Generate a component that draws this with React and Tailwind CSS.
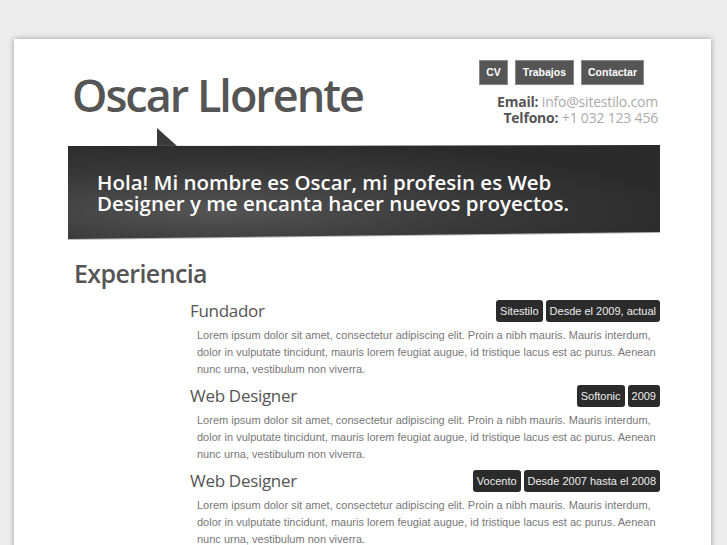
import React from 'react';

const jobs = [
  { title: 'Fundador', tags: ['Sitestilo', 'Desde el 2009, actual'] },
  { title: 'Web Designer', tags: ['Softonic', '2009'] },
  { title: 'Web Designer', tags: ['Vocento', 'Desde 2007 hasta el 2008'] },
];

const lorem =
  'Lorem ipsum dolor sit amet, consectetur adipiscing elit. Proin a nibh mauris. Mauris interdum, dolor in vulputate tincidunt, mauris lorem feugiat augue, id tristique lacus est ac purus. Aenean nunc urna, vestibulum non viverra.';

const App = () => {
  return (
    <div className="min-h-[545px] h-[545px] overflow-hidden bg-[#ededed] pt-[39px] pl-[14px] font-['Open_Sans',sans-serif]">
      <div className="w-[697px] min-h-[520px] bg-white shadow-[0_0_6px_rgba(0,0,0,0.35)] pl-[54px] pr-[51px] pt-[21px]">
        {/* Header */}
        <div className="flex justify-between">
          <h1 className="mt-[7px] ml-[4px] text-[45px] leading-[56px] font-semibold tracking-[-2px] text-[#555]">
            Oscar Llorente
          </h1>
          <div className="flex flex-col items-end">
            <nav className="flex gap-[7px] mr-[16px] font-['Liberation_Sans',sans-serif] text-[10.5px] font-bold text-white">
              <a className="h-[25px] px-[6px] flex items-center bg-[#555] border border-[#888]">CV</a>
              <a className="h-[25px] px-[7px] flex items-center bg-[#555] border border-[#888]">Trabajos</a>
              <a className="h-[25px] px-[6px] flex items-center bg-[#555] border border-[#888]">Contactar</a>
            </nav>
            <div className="mt-[9px] mr-[2px] text-right text-[14px] leading-[15.5px] tracking-[-0.2px] text-[#aaa]">
              <div>
                <span className="font-bold text-[#555]">Email:</span> info@sitestilo.com
              </div>
              <div>
                <span className="font-bold text-[#555]">Telfono:</span> +1 032 123 456
              </div>
            </div>
          </div>
        </div>

        {/* Speech banner */}
        <div className="relative mt-[20px]">
          <div className="absolute left-[89px] top-[-17px] w-0 h-0 border-l-[20px] border-l-[#3a3a3a] border-t-[18px] border-t-transparent"></div>
          <div className="bg-[#bbb] [clip-path:polygon(0_1px,100%_0,100%_calc(100%-7px),0_100%)] pb-[1px]">
            <div className="h-[94px] bg-[radial-gradient(ellipse_at_25%_70%,#555_0%,#3a3a3a_40%,#2b2b2b_75%)] [clip-path:polygon(0_1px,100%_0,100%_calc(100%-7px),0_100%)] pl-[29px] pt-[27px]">
              <p className="text-white text-[20.5px] leading-[21px] font-semibold tracking-[0px] w-[520px]">
                Hola! Mi nombre es Oscar, mi profesin es Web Designer y me encanta hacer nuevos proyectos.
              </p>
            </div>
          </div>
        </div>

        {/* Experiencia */}
        <h2 className="mt-[17px] ml-[6px] text-[25px] leading-[32px] font-semibold tracking-[-0.6px] text-[#555]">
          Experiencia
        </h2>
        <div className="ml-[122px] mt-[11px] flex flex-col gap-[7px]">
          {jobs.map((job, i) => (
            <div key={i}>
              <div className="flex justify-between items-center h-[22px]">
                <h3 className="text-[17px] leading-[22px] font-normal text-[#555] tracking-[-0.3px]">{job.title}</h3>
                <div className="flex gap-[3px] font-['Liberation_Sans',sans-serif] text-[11px]">
                  {job.tags.map((t) => (
                    <span key={t} className="h-[22px] px-[4px] flex items-center rounded-[3px] bg-[#2b2b2b] text-[#eee]">
                      {t}
                    </span>
                  ))}
                </div>
              </div>
              <p className="mt-[5px] ml-[7px] font-['Liberation_Sans',sans-serif] text-[11px] leading-[17px] text-[#777]">
                {lorem}
              </p>
            </div>
          ))}
        </div>
      </div>
    </div>
  );
};

export default App;
